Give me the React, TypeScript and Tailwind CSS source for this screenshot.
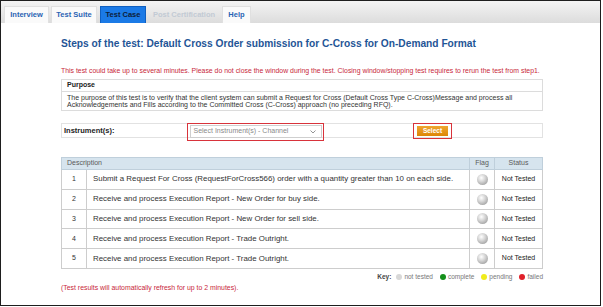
import React from "react";

const rows = [
  "Submit a Request For Cross (RequestForCross566) order with a quantity greater than 10 on each side.",
  "Receive and process Execution Report - New Order for buy side.",
  "Receive and process Execution Report - New Order for sell side.",
  "Receive and process Execution Report - Trade Outright.",
  "Receive and process Execution Report - Trade Outright.",
];

function Sphere() {
  return (
    <span className="inline-block w-[11px] h-[11px] rounded-full bg-[radial-gradient(circle_at_40%_35%,#ffffff_0%,#d4d4d4_40%,#8a8a8a_100%)]" />
  );
}

export default function App() {
  return (
    <div className="w-[603px] h-[307px] bg-white overflow-hidden font-['Liberation_Sans',Arial,sans-serif]">
      <div className="w-[601px] h-[306px] border border-[#1e1e1e] flex flex-col">
        {/* tab bar */}
        <div className="h-[22px] bg-[linear-gradient(#f4f4f4,#dcdcdc)] flex items-end pl-[3px] gap-[2px] text-[7.5px] font-bold">
          <div className="h-[17px] w-[45px] bg-[#fafafa] border border-[#e0e0e0] border-b-0 flex items-center justify-center text-[#2a64b4]">Interview</div>
          <div className="h-[17px] w-[46px] bg-[#fafafa] border border-[#e0e0e0] border-b-0 flex items-center justify-center text-[#2a64b4]">Test Suite</div>
          <div className="ml-[1px] h-[17px] w-[46px] bg-[#1b7ae6] border border-[#0f5fc0] border-b-0 flex items-center justify-center text-[#0c1d3a]">Test Case</div>
          <div className="h-[17px] w-[72px] flex items-center justify-center text-[#c2cad4]">Post Certification</div>
          <div className="h-[17px] w-[29px] bg-[#fafafa] border border-[#e0e0e0] border-b-0 flex items-center justify-center text-[#2a64b4]">Help</div>
        </div>

        <div className="pl-[60px] w-[542px] flex flex-col">
          <div className="mt-[14px] h-[14px] leading-[14px] text-[10.2px] font-bold text-[#1f5596] whitespace-nowrap">
            Steps of the test: Default Cross Order submission for C-Cross for On-Demand Format
          </div>
          <div className="mt-[15px] h-[10px] leading-[10px] text-[6.9px] text-[#c8283a] whitespace-nowrap">
            This test could take up to several minutes. Please do not close the window during the test. Closing window/stopping test requires to rerun the test from step1.
          </div>

          {/* purpose */}
          <div className="mt-[3px] w-[482px] border border-[#dcdcdc]">
            <div className="h-[12px] flex items-center pl-[5px] text-[7px] font-bold text-[#222] border-b border-[#dcdcdc]">Purpose</div>
            <div className="pl-[5px] pt-[1.5px] pb-[1px] text-[7px] leading-[7.5px] text-[#333]">
              The purpose of this test is to verify that the client system can submit a Request for Cross (Default Cross Type C-Cross)Message and process all
              <br />
              Acknowledgements and Fills according to the Committed Cross (C-Cross) approach (no preceding RFQ).
            </div>
          </div>

          {/* instrument */}
          <div className="mt-[12.5px] w-[482px] h-[15px] border border-[#e2e2e2] flex items-center">
            <div className="w-[125px] pl-[2px] text-[7.5px] font-bold text-[#222]">Instrument(s):</div>
            <div className="w-[137px] h-[18px] -mt-[1px] mb-[-3px] border-[1.5px] border-[#d8333b] p-[1.5px] flex">
              <div className="flex-1 border border-[#cfcfcf] bg-white flex items-center justify-between pl-[3px] pr-[5px] text-[7px] text-[#8a8a8a]">
                <span>Select Instrument(s) - Channel</span>
                <svg width="6" height="4" viewBox="0 0 6 4"><path d="M0.5 0.5 L3 3 L5.5 0.5" fill="none" stroke="#888" strokeWidth="0.9" /></svg>
              </div>
            </div>
            <div className="w-[89px]" />
            <div className="w-[39px] h-[16px] border-[1.5px] border-[#d8333b] flex items-center justify-center">
              <div className="w-[31px] h-[10px] bg-[linear-gradient(#f0a530,#dc8606)] flex items-center justify-center text-[6.5px] font-bold text-white">Select</div>
            </div>
          </div>

          {/* table */}
          <table className="mt-[19px] w-[482px] border-collapse text-[7px] text-[#333]">
            <thead>
              <tr className="h-[12px] bg-[#d6e4ee] text-[#5a5a5a]">
                <th colSpan={2} className="border border-[#bfcfdb] text-left font-normal pl-[5px]">Description</th>
                <th className="w-[25px] border border-[#bfcfdb] font-normal">Flag</th>
                <th className="w-[48px] border border-[#bfcfdb] font-normal">Status</th>
              </tr>
            </thead>
            <tbody>
              {rows.map((r, i) => (
                <tr key={i} className="h-[19.8px]">
                  <td className="w-[25px] border-[1.5px] border-[#cdcdcd] text-center">{i + 1}</td>
                  <td className="border-[1.5px] border-[#cdcdcd] pl-[6px] whitespace-nowrap text-[7.9px]">{r}</td>
                  <td className="border-[1.5px] border-[#cdcdcd] text-center align-middle">
                    <div className="flex items-center justify-center"><Sphere /></div>
                  </td>
                  <td className="border-[1.5px] border-[#cdcdcd] text-center text-[#222]">Not Tested</td>
                </tr>
              ))}
            </tbody>
          </table>

          {/* key */}
          <div className="mt-[4px] w-[482px] flex justify-end items-center gap-[2px] text-[6.5px] text-[#777] leading-[8px]">
            <span className="font-bold text-[#444] mr-[3px]">Key:</span>
            <span className="w-[6px] h-[6px] rounded-full bg-[#d8d8d8]" />
            <span className="mr-[5px]">not tested</span>
            <span className="w-[6px] h-[6px] rounded-full bg-[#14901a]" />
            <span className="mr-[5px]">complete</span>
            <span className="w-[6px] h-[6px] rounded-full bg-[#f0ec1c]" />
            <span className="mr-[5px]">pending</span>
            <span className="w-[6px] h-[6px] rounded-full bg-[#e0202a]" />
            <span>failed</span>
          </div>

          <div className="mt-[2px] text-[6.9px] leading-[10px] text-[#c8283a]">(Test results will automatically refresh for up to 2 minutes).</div>
        </div>
      </div>
    </div>
  );
}
